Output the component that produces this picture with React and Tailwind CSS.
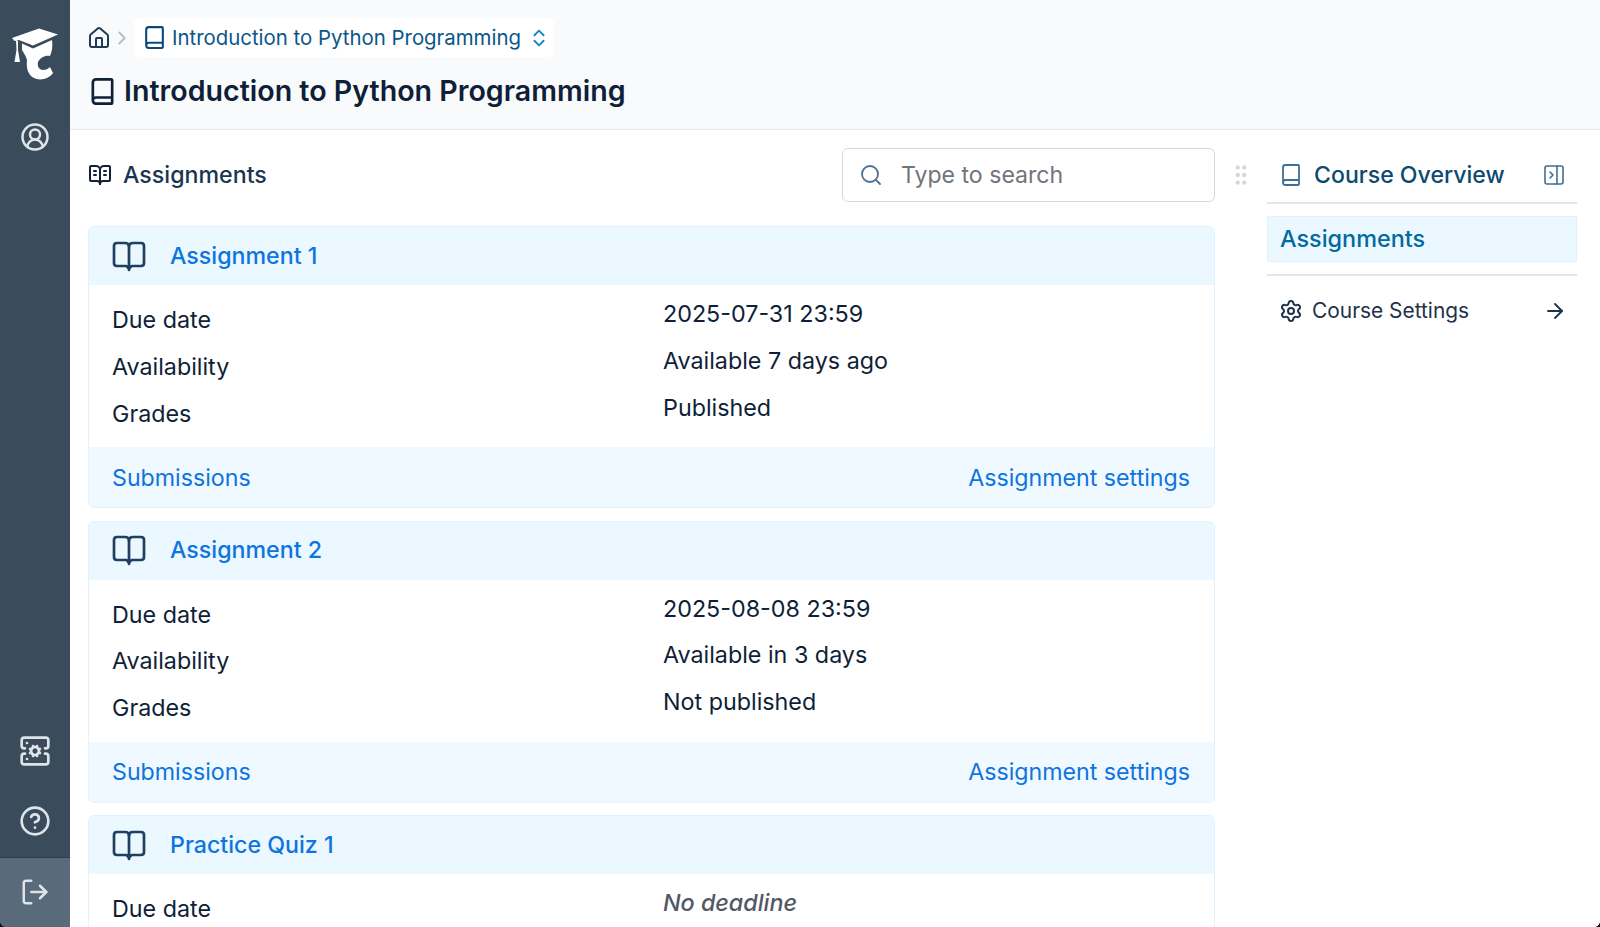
import {
  ArrowRight,
  Book,
  BookOpenText,
  ChevronRight,
  ChevronsUpDown,
  CircleHelp,
  CircleUserRound,
  GripVertical,
  House,
  LogOut,
  PanelRightClose,
  Search,
  ServerCog,
  Settings,
} from 'lucide-react'

const items = [
  { title: 'Assignment 1', due: '2025-07-31 23:59', availability: 'Available 7 days ago', grades: 'Published' },
  { title: 'Assignment 2', due: '2025-08-08 23:59', availability: 'Available in 3 days', grades: 'Not published' },
  { title: 'Practice Quiz 1', noDeadline: true },
]

function Logo() {
  return (
    <svg viewBox="5 20 60 65" className="w-[60px] h-[65px]" fill="#fff">
      <path d="M12 38 L39 28.5 L58 34.5 L33 45.5 L19 40 L14.5 41 Z" />
      <path d="M16 40 L18 41 L18 50 L20 62 L14.5 62 L16.5 50 Z" />
      <path d="M22 43.5 L33 48.5 L52 40 C53 46 52 51 50 56 C45 55 40 58 38 62 C37 66 39 70 43 70 C46 70 48 69 50 67 L53 73 C49 79 40 81 34 78 C28 75 26 68 27 60 C26 56 23 52 22 50 Z" />
    </svg>
  )
}

function OpenBook() {
  return (
    <svg viewBox="0 0 34 31" className="w-[34px] h-[31px]" fill="none" stroke="#1f4060" strokeWidth="2.7" strokeLinejoin="round" strokeLinecap="round">
      <path d="M17 5.5 C17 3.5 15.5 2 13 2 H5 C3 2 2 3 2 5 V22 C2 24 3 25 5 25 H14.5 L17 27.5 L19.5 25 H29 C31 25 32 24 32 22 V5 C32 3 31 2 29 2 H21 C18.5 2 17 3.5 17 5.5 Z" />
      <path d="M17 5.5 V29" />
    </svg>
  )
}

function Card({ item }) {
  return (
    <div className="shrink-0 rounded-md border border-[#e0f2fe] overflow-hidden">
      <div className="h-[58px] bg-[#ebf8ff] flex items-center pl-[23px] gap-[24px]">
        <OpenBook />
        <a className="text-[23.2px] font-medium text-[#0d74e0]">{item.title}</a>
      </div>
      <div className="flex h-[162px] pl-[23px] text-[#0f1f38] text-[23.3px]">
        <div className="w-[551px] pt-[12px]">
          <div className="h-[46.8px] leading-[46.8px]">Due date</div>
          <div className="h-[46.8px] leading-[46.8px]">Availability</div>
          <div className="h-[46.8px] leading-[46.8px]">Grades</div>
        </div>
        {item.noDeadline ? (
          <div className="pt-[6px]">
            <div className="h-[46.8px] leading-[46.8px] italic font-medium text-[#525866]">No deadline</div>
          </div>
        ) : (
          <div className="pt-[6px]">
            <div className="h-[46.8px] leading-[46.8px]">{item.due}</div>
            <div className="h-[46.8px] leading-[46.8px]">{item.availability}</div>
            <div className="h-[46.8px] leading-[46.8px]">{item.grades}</div>
          </div>
        )}
      </div>
      <div className="h-[60px] bg-[#f0f9ff] flex items-center justify-between pl-[23px] pr-6 pt-[2px] text-[23.2px] text-[#0d74e0]">
        <a>Submissions</a>
        <a>Assignment settings</a>
      </div>
    </div>
  )
}

export default function App() {
  return (
    <div className="relative h-[927px] overflow-hidden flex bg-white font-['Inter',sans-serif]">
      <aside className="w-[70px] shrink-0 bg-[#3a4b5c] flex flex-col items-center text-[#dfe4e9]">
        <div className="mt-[20px]"><Logo /></div>
        <CircleUserRound size={30} strokeWidth={2} className="mt-[37px]" />
        <div className="flex-1" />
        <ServerCog size={32} strokeWidth={2} className="mb-[38px]" />
        <CircleHelp size={32} strokeWidth={2} className="mb-[20px]" />
        <div className="w-full h-[70px] border-t border-[#2e3c4a] bg-[#596a7a] flex items-center justify-center pb-[2px]">
          <LogOut size={30} strokeWidth={2} />
        </div>
      </aside>

      <main className="flex-1 flex flex-col min-w-0">
        <header className="h-[130px] shrink-0 bg-[#f8fafc] border-b border-[#e6eaee] pl-[18px] pt-[18px]">
          <div className="flex items-center h-[39px] ml-[-1px]">
            <House size={24} strokeWidth={2} className="text-[#1f3a54]" />
            <ChevronRight size={22} strokeWidth={2} className="text-[#b6bdc5] mr-[1px]" />
            <div className="h-[39px] bg-white rounded-md flex items-center pl-[8px] pr-[4px] gap-[5px] text-[20.4px] text-[#0b5688]">
              <Book size={25} strokeWidth={2} className="text-[#0b4a78]" />
              <span className="pt-[1px]">Introduction to Python Programming</span>
              <ChevronsUpDown size={22} strokeWidth={2} className="text-[#0e86c8] ml-[2px]" />
            </div>
          </div>
          <div className="flex items-center mt-[10px] h-[48px] gap-[7px]">
            <Book size={29} strokeWidth={2.2} className="text-[#0f2038] mt-[1px]" />
            <h1 className="text-[28.6px] font-semibold text-[#0f1f38]">Introduction to Python Programming</h1>
          </div>
        </header>

        <div className="flex flex-1 min-h-0">
          <section className="w-[1145px] pl-[18px] pr-0 flex flex-col shrink-0 min-h-0">
            <div className="flex items-center justify-between h-[54px] mt-[18px] mb-[24px] shrink-0">
              <div className="flex items-center gap-[11px] text-[23.2px] font-medium text-[#1b3550]">
                <BookOpenText size={24} strokeWidth={2} className="text-[#0f2038]" />
                <span>Assignments</span>
              </div>
              <div className="w-[373px] h-[54px] rounded-md border border-[#d5d9de] bg-white flex items-center pl-[16px] gap-[18px] text-[23.1px] text-[#70757c]">
                <Search size={24} strokeWidth={1.8} className="text-[#4c7090]" />
                <span>Type to search</span>
              </div>
            </div>
            <div className="flex flex-col gap-[12.5px] overflow-hidden">
              {items.map((it) => <Card key={it.title} item={it} />)}
            </div>
          </section>

          <div className="w-[52px] shrink-0 flex justify-center pt-[32px]">
            <GripVertical size={26} strokeWidth={2} className="text-[#d3d7db]" />
          </div>

          <aside className="w-[310px] shrink-0 pt-[18px]">
            <div className="h-[56px] flex items-center pl-[12px] pr-[11px] border-b-2 border-[#e4e7ea] text-[#0c4a6e]">
              <Book size={24} strokeWidth={1.8} className="text-[#3f6f94]" />
              <span className="ml-[11px] text-[23.1px] font-medium flex-1">Course Overview</span>
              <PanelRightClose size={24} strokeWidth={1.6} className="text-[#3f6f94]" />
            </div>
            <div className="mt-[12px] h-[46px] bg-[#ebf8ff] border border-[#e0f2fe] flex items-center pl-[12px] text-[23.4px] font-medium text-[#0369a1]">Assignments</div>
            <div className="mt-[12px] border-t-2 border-[#e4e7ea] h-[72px] flex items-center pl-[12px] pr-[10px] text-[#1d3349]">
              <Settings size={24} strokeWidth={2} />
              <span className="ml-[9px] text-[20.9px] flex-1">Course Settings</span>
              <ArrowRight size={24} strokeWidth={1.8} />
            </div>
          </aside>
        </div>
      </main>

      <div className="absolute right-0 bottom-0 w-[6px] h-[6px] bg-[radial-gradient(circle_at_top_left,transparent_70%,#111_72%)]" />
      <div className="absolute left-0 bottom-0 w-[6px] h-[6px] bg-[radial-gradient(circle_at_top_right,transparent_70%,#111_72%)]" />
    </div>
  )
}
